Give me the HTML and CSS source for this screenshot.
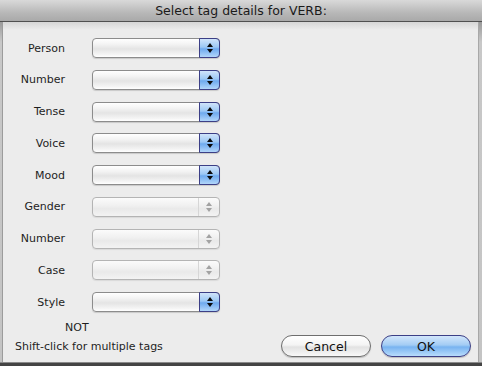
FILE: index.html
```html
<!DOCTYPE html>
<html lang="en">
<head>
    <meta charset="UTF-8">
    <title>Select tag details</title>
    <link rel="stylesheet" href="styles.css">
</head>
<body>
    <div class="window">
        <div class="titlebar">Select tag details for VERB:</div>
        <div class="main">
            <div class="side side-left"></div>
            <div class="sheet">
                <div class="fields">
                    <label>Person</label>
                    <div class="popup"><span class="stepper"><i class="up"></i><i class="down"></i></span></div>
                    <label>Number</label>
                    <div class="popup"><span class="stepper"><i class="up"></i><i class="down"></i></span></div>
                    <label>Tense</label>
                    <div class="popup"><span class="stepper"><i class="up"></i><i class="down"></i></span></div>
                    <label>Voice</label>
                    <div class="popup"><span class="stepper"><i class="up"></i><i class="down"></i></span></div>
                    <label>Mood</label>
                    <div class="popup"><span class="stepper"><i class="up"></i><i class="down"></i></span></div>
                    <label>Gender</label>
                    <div class="popup disabled"><span class="stepper"><i class="up"></i><i class="down"></i></span></div>
                    <label>Number</label>
                    <div class="popup disabled"><span class="stepper"><i class="up"></i><i class="down"></i></span></div>
                    <label>Case</label>
                    <div class="popup disabled"><span class="stepper"><i class="up"></i><i class="down"></i></span></div>
                    <label>Style</label>
                    <div class="popup"><span class="stepper"><i class="up"></i><i class="down"></i></span></div>
                </div>
                <div class="not-label">NOT</div>
                <div class="footer">
                    <span class="hint">Shift-click for multiple tags</span>
                    <div class="buttons">
                        <button class="btn">Cancel</button>
                        <button class="btn default">OK</button>
                    </div>
                </div>
            </div>
            <div class="side side-right"></div>
        </div>
        <div class="bottom"></div>
    </div>
</body>
</html>
```

FILE: styles.css
```css
* {
    margin: 0;
    padding: 0;
    box-sizing: border-box;
}

body {
    font-family: 'DejaVu Sans', 'Noto Sans', sans-serif;
    font-size: 11px;
    color: #000000;
    background: #d4d4d4;
    width: 482px;
    height: 366px;
    overflow: hidden;
}

.window {
    display: flex;
    flex-direction: column;
    height: 366px;
}

.titlebar {
    height: 22px;
    line-height: 21px;
    text-align: center;
    font-size: 12.5px;
    color: #1a1a1a;
    background: linear-gradient(#d9d9d9, #b8b8b8 60%, #a9a9a9);
    border-bottom: 1px solid #505050;
}

.main {
    flex: 1;
    display: flex;
}

.side {
    background: linear-gradient(#9a9a9a, #c8c8c8 20px, #c4c4c4);
}

.side-left {
    width: 3px;
    border-right: 1px solid #9c9c9c;
}

.side-right {
    width: 4px;
    border-left: 1px solid #a8a8a8;
}

.sheet {
    flex: 1;
    background: linear-gradient(#d6d6d6, #ececec 8px, #ececec);
    padding-top: 16px;
    display: flex;
    flex-direction: column;
}

.bottom {
    height: 4px;
    background: #444444;
    border-top: 1px solid #8a8a8a;
}

.fields {
    display: grid;
    grid-template-columns: 62px 128px;
    grid-auto-rows: 20px;
    column-gap: 27px;
    row-gap: 11.75px;
    align-items: center;
}

.fields label {
    text-align: right;
    color: #1e1e1e;
}

.popup {
    position: relative;
    height: 20px;
    border: 1px solid #8c8c8c;
    border-radius: 4px;
    background: linear-gradient(#ffffff, #f3f3f3 30%, #e4e4e4 55%, #f4f4f4 85%, #ffffff);
    box-shadow: 0 1px 1px rgba(0, 0, 0, 0.15);
}

.stepper {
    position: absolute;
    top: -1px;
    right: -1px;
    bottom: -1px;
    width: 21px;
    display: flex;
    flex-direction: column;
    align-items: center;
    justify-content: center;
    gap: 2px;
    border: 1px solid #3c3f86;
    border-radius: 0 4px 4px 0;
    background: linear-gradient(#d0e4fa, #9cc8f4 45%, #6eaaee 55%, #b2d6fa);
}

.stepper i {
    width: 0;
    height: 0;
    border-left: 3px solid transparent;
    border-right: 3px solid transparent;
}

.stepper .up {
    border-bottom: 4px solid #0a0a0a;
}

.stepper .down {
    border-top: 4px solid #0a0a0a;
}

.popup.disabled {
    border-color: #b4b4b4;
    background: linear-gradient(#fbfbfb, #f1f1f1 40%, #e9e9e9 60%, #f3f3f3);
    box-shadow: 0 1px 1px rgba(0, 0, 0, 0.08);
}

.popup.disabled .stepper {
    border: none;
    border-left: 1px solid #d6d6d6;
    background: none;
    top: 0;
    right: 0;
    bottom: 0;
}

.popup.disabled .stepper .up {
    border-bottom-color: #a2a2a2;
}

.popup.disabled .stepper .down {
    border-top-color: #a2a2a2;
}

.not-label {
    padding-top: 9px;
    margin-left: 62px;
    color: #1e1e1e;
}

.footer {
    display: flex;
    align-items: center;
    justify-content: space-between;
    padding: 1px 7px 0 12px;
}

.hint {
    color: #1e1e1e;
}

.buttons {
    display: flex;
    gap: 10px;
}

.btn {
    width: 90px;
    height: 22px;
    font-family: inherit;
    font-size: 12.5px;
    color: #111111;
    border: 1px solid #6e6e6e;
    border-radius: 11px;
    background: linear-gradient(#ffffff, #f4f4f4 45%, #e2e2e2 55%, #f8f8f8);
    box-shadow: 0 1px 1px rgba(0, 0, 0, 0.2);
}

.btn.default {
    border-color: #3c3f86;
    background: linear-gradient(#d2e6fb, #a3ccf4 45%, #78b3f0 55%, #b8dcfc);
}
```
